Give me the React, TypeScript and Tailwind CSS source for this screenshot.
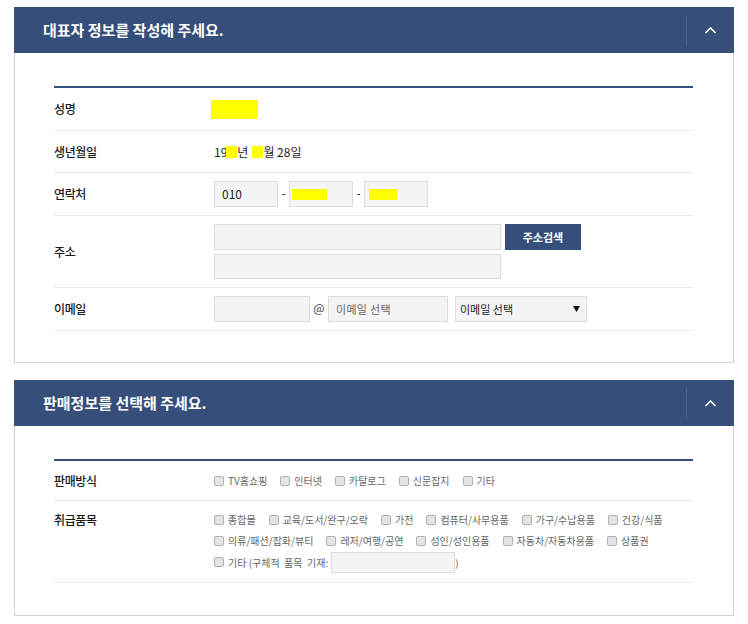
import React from "react";

const NAVY = "bg-[#354e7a]";

function Header({ title }: { title: string }) {
  return (
    <div className={`h-[46px] ${NAVY} flex items-center justify-between pl-[29px]`}>
      <h2 className="text-white text-[15px] font-bold">{title}</h2>
      <div className="h-[31px] w-[48px] border-l border-[#4a6189] flex items-center justify-center">
        <svg width="13" height="8" viewBox="0 0 13 8" fill="none">
          <polyline points="1.5,7 6.5,2 11.5,7" stroke="white" strokeWidth="1.6" />
        </svg>
      </div>
    </div>
  );
}

function Label({ children }: { children: React.ReactNode }) {
  return (
    <div className="w-[160px] shrink-0 text-[12px] font-medium tracking-[-0.4px] text-[#1a1a1a]">{children}</div>
  );
}

const inputCls = "bg-[#f4f4f4] border border-[#dcdcdc]";

function Check({ label }: { label: string }) {
  return (
    <span className="flex items-center">
      <span className="w-[10px] h-[10px] rounded-[2px] border border-[#b1b1b1] bg-[#e4e4e4] mr-[4px]" />
      <span className="text-[10px] text-[#666] whitespace-pre">{label}</span>
    </span>
  );
}

export default function App() {
  return (
    <div
      className="min-h-[624px] bg-white pl-[14px] pt-[7px]"
      style={{ fontFamily: '"Noto Sans CJK KR", "Noto Sans", sans-serif' }}
    >
      <section className="w-[720px]">
        <Header title="대표자 정보를 작성해 주세요." />
        <div className="border-x border-b border-[#d5d5d5] pl-[39px] pr-[40px] pt-[33px] pb-[31px]">
          <div className={`h-[2px] ${NAVY}`} />
          <div className="h-[43px] border-b border-[#ebebeb] flex items-center">
            <Label>성명</Label>
            <span className="block w-[47px] h-[19px] bg-[#ffff00] ml-[-3px]" />
          </div>
          <div className="h-[42px] border-b border-[#ebebeb] flex items-center">
            <Label>생년월일</Label>
            <span className="text-[12px] text-[#222] flex items-center">
              19<span className="inline-block w-[11px] h-[12px] bg-[#ffff00] ml-[-1px]" />년
              <span className="inline-block w-[11px] h-[12px] bg-[#ffff00] ml-[4px]" />월 28일
            </span>
          </div>
          <div className="h-[43px] border-b border-[#ebebeb] flex items-center">
            <Label>연락처</Label>
            <div className="flex items-center text-[12px] text-[#222]">
              <div className={`${inputCls} w-[64px] h-[26px] pl-[7px] flex items-center`}>010</div>
              <span className="w-[11px] text-center mt-[-2px]">-</span>
              <div className={`${inputCls} w-[64px] h-[26px] pl-[2px] flex items-center`}>
                <span className="block w-[35px] h-[11px] bg-[#ffff00]" />
              </div>
              <span className="w-[11px] text-center mt-[-2px]">-</span>
              <div className={`${inputCls} w-[64px] h-[26px] pl-[4px] flex items-center`}>
                <span className="block w-[28px] h-[11px] bg-[#ffff00]" />
              </div>
            </div>
          </div>
          <div className="py-[8px] border-b border-[#ebebeb] flex items-center">
            <Label>주소</Label>
            <div className="flex flex-col gap-[4px]">
              <div className="flex items-center">
                <div className={`${inputCls} w-[287px] h-[26px]`} />
                <button className={`ml-[4px] w-[76px] h-[26px] ${NAVY} text-white text-[11px] font-bold`}>
                  주소검색
                </button>
              </div>
              <div className={`${inputCls} w-[287px] h-[25px]`} />
            </div>
          </div>
          <div className="h-[43px] border-b border-[#ebebeb] flex items-center">
            <Label>이메일</Label>
            <div className="flex items-center">
              <div className={`${inputCls} w-[96px] h-[26px]`} />
              <span className="w-[18px] text-center text-[12px] text-[#444] self-start mt-[6px] leading-[12px]">@</span>
              <div className={`${inputCls} w-[120px] h-[26px] pl-[7px] flex items-center text-[11px] text-[#666] tracking-[0.3px]`}>
                이메일 선택
              </div>
              <div className={`${inputCls} ml-[7px] w-[132px] h-[26px] pl-[4px] pr-[6px] flex items-center justify-between text-[11px] text-[#222]`}>
                <span>이메일 선택</span>
                <svg width="7" height="6" viewBox="0 0 7 6">
                  <polygon points="0,0 7,0 3.5,6" fill="#111" />
                </svg>
              </div>
            </div>
          </div>
        </div>
      </section>

      <section className="w-[720px] mt-[17px]">
        <Header title="판매정보를 선택해 주세요." />
        <div className="border-x border-b border-[#d5d5d5] pl-[39px] pr-[40px] pt-[33px] pb-[32px]">
          <div className={`h-[2px] ${NAVY}`} />
          <div className="h-[40px] border-b border-[#ebebeb] flex items-center">
            <Label>판매방식</Label>
            <div className="flex items-center gap-x-[13px]">
              <Check label="TV홈쇼핑" />
              <Check label="인터넷" />
              <Check label="카탈로그" />
              <Check label="신문잡지" />
              <Check label="기타" />
            </div>
          </div>
          <div className="pt-[8px] pb-[9px] border-b border-[#ebebeb] flex items-start">
            <div className="h-[21px] flex items-center">
              <Label>취급품목</Label>
            </div>
            <div className="flex flex-col">
              <div className="h-[21px] flex items-center gap-x-[13px]">
                <Check label="종합몰" />
                <Check label="교육/도서/완구/오락" />
                <Check label="가전" />
                <Check label="컴퓨터/사무용품" />
                <Check label="가구/수납용품" />
                <Check label="건강/식품" />
              </div>
              <div className="h-[21px] flex items-center gap-x-[13px]">
                <Check label="의류/패션/잡화/뷰티" />
                <Check label="레저/여행/공연" />
                <Check label="성인/성인용품" />
                <Check label="자동차/자동차용품" />
                <Check label="상품권" />
              </div>
              <div className="h-[22px] flex items-center">
                <Check label="기타 (구체적  품목  기재:" />
                <div className={`${inputCls} ml-[3px] w-[124px] h-[21px]`} />
                <span className="text-[10px] text-[#666]">)</span>
              </div>
            </div>
          </div>
        </div>
      </section>
    </div>
  );
}
